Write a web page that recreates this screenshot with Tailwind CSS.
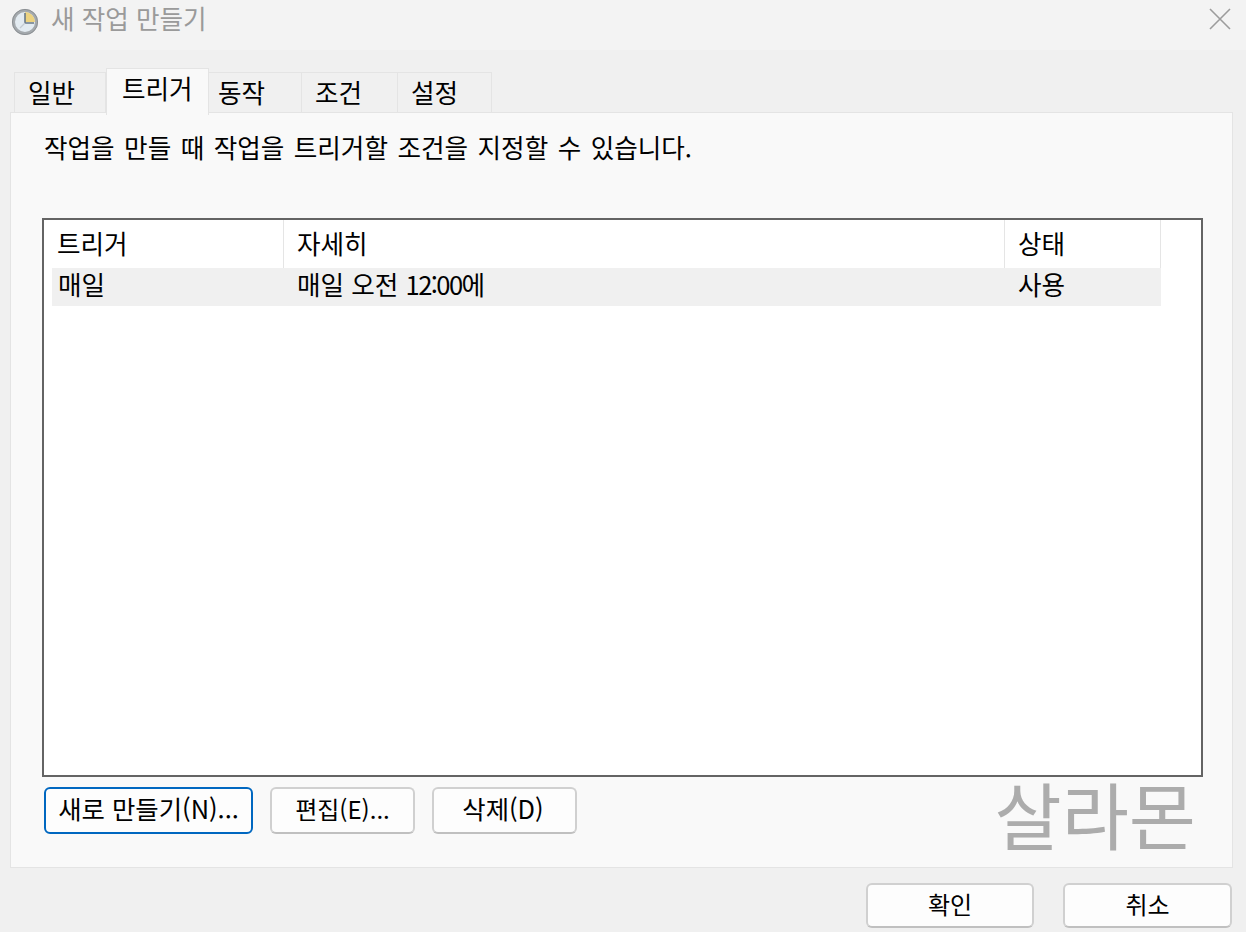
<!DOCTYPE html>
<html lang="ko">
<head>
<meta charset="utf-8">
<script src="https://cdn.jsdelivr.net/npm/@tailwindcss/browser@4"></script>
</head>
<body class="m-0 bg-[#f0f0f0]">
<div class="w-[1246px] h-[932px] overflow-hidden bg-[#f0f0f0] text-black text-[25.6px] leading-[34px] font-['Noto_Sans_CJK_KR','Noto_Sans',sans-serif] flex flex-col">
  <div class="h-[50px] shrink-0 bg-[#f3f3f3] flex items-start">
    <svg class="ml-[11px] mt-[8px] w-[28px] h-[28px]" viewBox="0 0 28 28">
      <circle cx="14" cy="14" r="11.5" fill="#e3ebf1" stroke="#a4a9ad" stroke-width="3"/>
      <circle cx="14" cy="14" r="12.6" fill="none" stroke="#85898d" stroke-width="0.8"/>
      <path d="M14 14V4A10 10 0 0 1 24 14Z" fill="#ecd27f"/>
      <path d="M14 5V15H23" fill="none" stroke="#6a7a88" stroke-width="1.6"/>
      <path d="M14 15L9 20" fill="none" stroke="#c3cbd2" stroke-width="1.2"/>
    </svg>
    <div class="ml-[12px] mt-[4px] text-[#9a9a9a] leading-[28px]">새 작업 만들기</div>
    <svg class="ml-auto mr-[15px] mt-[8px] w-[22px] h-[22px]" viewBox="0 0 22 22"><path d="M1 1L21 21M21 1L1 21" stroke="#9c9c9c" stroke-width="1.6" fill="none"/></svg>
  </div>
  <div class="h-[65px] shrink-0 pl-[14px] flex items-end relative z-10">
    <div class="w-[92px] h-[40px] mb-[3px] bg-[#f0f0f0] border border-b-0 border-[#e4e4e4] pl-[13px] leading-[38px]">일반</div>
    <div class="w-[103px] h-[47px] bg-[#f9f9f9] border border-b-0 border-[#e4e4e4] pl-[15px] leading-[38px]">트리거</div>
    <div class="w-[93px] h-[40px] mb-[3px] bg-[#f0f0f0] border-r border-t border-[#e4e4e4] pl-[9px] leading-[38px]">동작</div>
    <div class="w-[96px] h-[40px] mb-[3px] bg-[#f0f0f0] border-r border-t border-[#e4e4e4] pl-[13px] leading-[38px]">조건</div>
    <div class="w-[94px] h-[40px] mb-[3px] bg-[#f0f0f0] border-r border-t border-[#e4e4e4] pl-[13px] leading-[38px]">설정</div>
  </div>
  <div class="-mt-[3px] ml-[10px] w-[1223px] h-[756px] shrink-0 bg-[#f9f9f9] border border-[#e4e4e4] pl-[31px] flex flex-col">
    <div class="mt-[17px] ml-[2px] h-[34px] whitespace-nowrap [word-spacing:2.3px]">작업을 만들 때 작업을 트리거할 조건을 지정할 수 있습니다.</div>
    <div class="mt-[54px] w-[1161px] h-[559px] bg-white border-2 border-[#646464]">
      <div class="flex h-[48px]">
        <div class="w-[240px] border-r border-[#e5e5e5] pl-[13px] leading-[46px]">트리거</div>
        <div class="w-[721px] border-r border-[#e5e5e5] pl-[13px] leading-[46px]">자세히</div>
        <div class="w-[156px] border-r border-[#e5e5e5] pl-[13px] leading-[46px]">상태</div>
      </div>
      <div class="flex ml-[8px] w-[1109px] h-[38px] bg-[#f0f0f0] leading-[32px]">
        <div class="w-[232px] pl-[6px]">매일</div>
        <div class="w-[721px] pl-[13px] whitespace-nowrap">매일 오전 <span class="tracking-[-1.6px]">12:00</span>에</div>
        <div class="w-[156px] pl-[13px]">사용</div>
      </div>
    </div>
    <div class="mt-[10px] flex items-start h-[47px]">
      <button class="ml-[2px] w-[209px] h-[47px] pb-[4px] bg-[#fdfdfd] border-2 border-[#0067c0] rounded-[6px] text-[25.4px] leading-none whitespace-nowrap">새로 만들기(N)...</button>
      <button class="ml-[17px] w-[145px] h-[47px] pb-[4px] bg-[#fdfdfd] border-2 border-[#d0d0d0] border-b-[#c0c0c0] rounded-[6px] text-[24px] leading-none whitespace-nowrap">편집(E)...</button>
      <button class="ml-[17px] w-[145px] h-[47px] pb-[4px] pr-[3px] bg-[#fdfdfd] border-2 border-[#d0d0d0] border-b-[#c0c0c0] rounded-[6px] text-[25.4px] leading-none whitespace-nowrap">삭제(D)</button>
      <div class="ml-auto mr-[36px] -mt-[23px] text-[#acacac] text-[73px] leading-[96px] whitespace-nowrap">살라몬</div>
    </div>
  </div>
  <div class="mt-[15px] flex justify-end gap-[29px] pr-[14px]">
    <button class="w-[168px] h-[45px] pb-[4px] bg-[#fdfdfd] border-2 border-[#d0d0d0] border-b-[#c0c0c0] rounded-[6px] text-[24px] leading-none">확인</button>
    <button class="w-[169px] h-[45px] pb-[4px] bg-[#fdfdfd] border-2 border-[#d0d0d0] border-b-[#c0c0c0] rounded-[6px] text-[24px] leading-none">취소</button>
  </div>
</div>
</body>
</html>
